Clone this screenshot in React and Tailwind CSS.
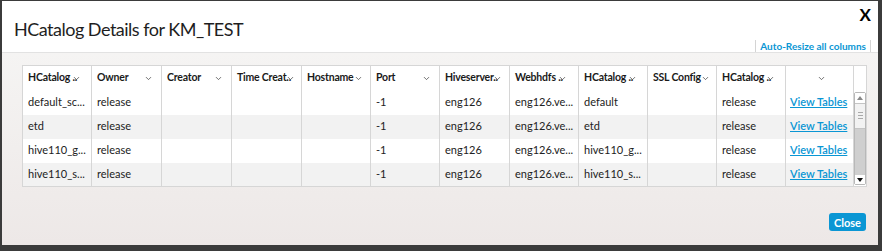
import { ChevronDown } from 'lucide-react';

const columns = [
  { label: 'HCatalog ..', w: 69, trunc: true },
  { label: 'Owner', w: 70 },
  { label: 'Creator', w: 70 },
  { label: 'Time Creat..', w: 70, trunc: true },
  { label: 'Hostname', w: 69, tight: true },
  { label: 'Port', w: 69 },
  { label: 'Hiveserver..', w: 70, trunc: true },
  { label: 'Webhdfs ..', w: 69, trunc: true },
  { label: 'HCatalog ..', w: 69, trunc: true },
  { label: 'SSL Config', w: 69, tight: true },
  { label: 'HCatalog ..', w: 69, trunc: true },
  { label: '', w: 68 },
];

const rows = [
  ['default_sc...', 'release', '', '', '', '-1', 'eng126', 'eng126.ve...', 'default', '', 'release'],
  ['etd', 'release', '', '', '', '-1', 'eng126', 'eng126.ve...', 'etd', '', 'release'],
  ['hive110_g...', 'release', '', '', '', '-1', 'eng126', 'eng126.ve...', 'hive110_g...', '', 'release'],
  ['hive110_s...', 'release', '', '', '', '-1', 'eng126', 'eng126.ve...', 'hive110_s...', '', 'release'],
];

const Chevron = ({ className = '' }) => (
  <ChevronDown className={`w-[9px] h-[9px] text-[#444] shrink-0 ${className}`} strokeWidth={2} />
);

const Scrollbar = () => (
  <div className="flex flex-col h-full w-[12px] mx-auto border border-[#b8b8b8] rounded-[2px] bg-[#cfcfcf]">
    <div className="h-[10px] bg-white flex items-center justify-center">
      <div className="w-0 h-0 border-l-[3px] border-r-[3px] border-b-[4px] border-l-transparent border-r-transparent border-b-[#888]" />
    </div>
    <div className="h-[26px] bg-[#f2f2f2] border-y border-[#c4c4c4] flex flex-col items-center justify-center gap-[2px]">
      <div className="w-[5px] h-px bg-[#aaa]" />
      <div className="w-[5px] h-px bg-[#aaa]" />
      <div className="w-[5px] h-px bg-[#aaa]" />
    </div>
    <div className="flex-1" />
    <div className="h-[9px] bg-white flex items-center justify-center">
      <div className="w-0 h-0 border-l-[3px] border-r-[3px] border-t-[4px] border-l-transparent border-r-transparent border-t-[#111]" />
    </div>
  </div>
);

const App = () => {
  return (
    <div
      className="w-[882px] h-[251px] bg-[#3b3b3b] pl-[2px] pt-[1px] pr-[4px] pb-[6px]"
      style={{ fontFamily: 'Lato, "Open Sans", sans-serif' }}
    >
      <div className="w-full h-full flex flex-col">
        {/* Header */}
        <div className="h-[52px] bg-white border-b border-[#e2e2e2] relative">
          <h1 className="pl-[12px] pt-[16px] text-[18px] leading-[24px] text-[#1e1e1e] tracking-[-0.5px]">
            HCatalog Details for KM_TEST
          </h1>
          <button className="absolute right-[7px] top-[5px] text-[17px] font-bold text-black leading-none">X</button>
          <div className="absolute right-[7px] bottom-0 flex items-center">
            <span className="w-px h-[12px] bg-[#d4d4d4]" />
            <a className="px-[4px] text-[10px] font-bold text-[#0a96d4] leading-[12px]">Auto-Resize all columns</a>
            <span className="w-px h-[12px] bg-[#d4d4d4]" />
          </div>
        </div>

        {/* Body */}
        <div className="flex-1 bg-gradient-to-b from-[#f5f4f3] to-[#ede8e7] pt-[12px] pl-[20px] pr-[12px] flex flex-col">
          <table className="table-fixed border-collapse border border-[#d6d6d6] bg-white text-[11px] text-[#222] w-[844px]">
            <colgroup>
              {columns.map((c, i) => (
                <col key={i} style={{ width: c.w }} />
              ))}
              <col style={{ width: 13 }} />
            </colgroup>
            <thead>
              <tr className="h-[25px]">
                {columns.map((c, i) => (
                  <th key={i} className="border-r border-[#d6d6d6] pl-[5px] pr-[2px] font-bold text-left text-[#1a1a1a]">
                    {c.label === '' ? (
                      <div className="flex justify-center">
                        <Chevron />
                      </div>
                    ) : (
                      <div className={`flex items-center text-[10.5px] tracking-[-0.2px] ${c.trunc || c.tight ? '' : 'justify-between pr-[6px]'}`}>
                        <span className="whitespace-nowrap">{c.label}</span>
                        <Chevron className={c.trunc ? '-ml-[5px]' : ''} />
                      </div>
                    )}
                  </th>
                ))}
                <th className="bg-white" />
              </tr>
            </thead>
            <tbody>
              {rows.map((r, ri) => (
                <tr key={ri} className={`h-[24px] ${ri % 2 === 1 ? 'bg-[#f2f2f2]' : 'bg-white'}`}>
                  {r.map((v, ci) => (
                    <td key={ci} className="border-r border-[#d6d6d6] px-[5px] whitespace-nowrap">
                      {v}
                    </td>
                  ))}
                  <td className="border-r border-[#d6d6d6] px-[4px]">
                    <a className="text-[#0a96d4] underline font-semibold">View Tables</a>
                  </td>
                  {ri === 0 && (
                    <td rowSpan={4} className="bg-white py-[1px] align-top h-[96px]">
                      <Scrollbar />
                    </td>
                  )}
                </tr>
              ))}
            </tbody>
          </table>
          <div className="flex justify-end mt-[26px]">
            <button className="h-[18px] px-[5px] bg-[#0a96d4] rounded-[3px] text-white text-[11px] font-bold leading-none">
              Close
            </button>
          </div>
        </div>
      </div>
    </div>
  );
};

export default App;
